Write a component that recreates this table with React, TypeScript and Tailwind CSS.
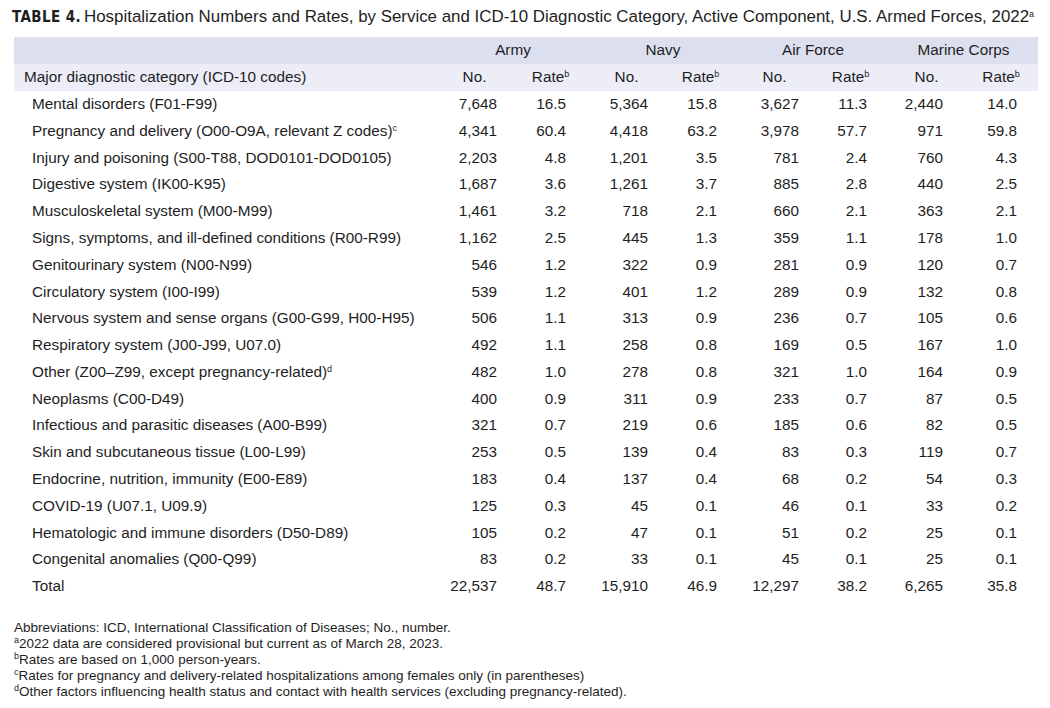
import React from "react";

const rows: [string, string | null, string[]][] = [
  ["Mental disorders (F01-F99)", null, ["7,648", "16.5", "5,364", "15.8", "3,627", "11.3", "2,440", "14.0"]],
  ["Pregnancy and delivery (O00-O9A, relevant Z codes)", "c", ["4,341", "60.4", "4,418", "63.2", "3,978", "57.7", "971", "59.8"]],
  ["Injury and poisoning (S00-T88, DOD0101-DOD0105)", null, ["2,203", "4.8", "1,201", "3.5", "781", "2.4", "760", "4.3"]],
  ["Digestive system (IK00-K95)", null, ["1,687", "3.6", "1,261", "3.7", "885", "2.8", "440", "2.5"]],
  ["Musculoskeletal system (M00-M99)", null, ["1,461", "3.2", "718", "2.1", "660", "2.1", "363", "2.1"]],
  ["Signs, symptoms, and ill-defined conditions (R00-R99)", null, ["1,162", "2.5", "445", "1.3", "359", "1.1", "178", "1.0"]],
  ["Genitourinary system (N00-N99)", null, ["546", "1.2", "322", "0.9", "281", "0.9", "120", "0.7"]],
  ["Circulatory system (I00-I99)", null, ["539", "1.2", "401", "1.2", "289", "0.9", "132", "0.8"]],
  ["Nervous system and sense organs (G00-G99, H00-H95)", null, ["506", "1.1", "313", "0.9", "236", "0.7", "105", "0.6"]],
  ["Respiratory system (J00-J99, U07.0)", null, ["492", "1.1", "258", "0.8", "169", "0.5", "167", "1.0"]],
  ["Other (Z00\u2013Z99, except pregnancy-related)", "d", ["482", "1.0", "278", "0.8", "321", "1.0", "164", "0.9"]],
  ["Neoplasms (C00-D49)", null, ["400", "0.9", "311", "0.9", "233", "0.7", "87", "0.5"]],
  ["Infectious and parasitic diseases (A00-B99)", null, ["321", "0.7", "219", "0.6", "185", "0.6", "82", "0.5"]],
  ["Skin and subcutaneous tissue (L00-L99)", null, ["253", "0.5", "139", "0.4", "83", "0.3", "119", "0.7"]],
  ["Endocrine, nutrition, immunity (E00-E89)", null, ["183", "0.4", "137", "0.4", "68", "0.2", "54", "0.3"]],
  ["COVID-19 (U07.1, U09.9)", null, ["125", "0.3", "45", "0.1", "46", "0.1", "33", "0.2"]],
  ["Hematologic and immune disorders (D50-D89)", null, ["105", "0.2", "47", "0.1", "51", "0.2", "25", "0.1"]],
  ["Congenital anomalies (Q00-Q99)", null, ["83", "0.2", "33", "0.1", "45", "0.1", "25", "0.1"]],
  ["Total", null, ["22,537", "48.7", "15,910", "46.9", "12,297", "38.2", "6,265", "35.8"]],
];

const pr = [
  "pr-[15px]",
  "pr-[23px]",
  "pr-[16px]",
  "pr-[20px]",
  "pr-[13px]",
  "pr-[22px]",
  "pr-[21px]",
  "pr-[21px]",
];

const grid = "grid grid-cols-[423px_75px_77px_75px_73px_75px_77px_75px_74px]";

function Sup({ c }: { c: string }) {
  return <span className="relative -top-[5px] text-[9px] leading-none">{c}</span>;
}

export default function App() {
  return (
    <div
      className="w-[1050px] h-[708px] bg-white text-[#1e1e1e] overflow-hidden"
      style={{ fontFamily: "'Liberation Sans', Arial, sans-serif" }}
    >
      <div className="pl-[12px] pt-[7px] h-[37px] text-[16.9px] leading-[20px] whitespace-nowrap">
        <span
          className="font-bold tracking-[0.4px] text-[15px] mr-[3px]"
          style={{ fontFamily: "'DejaVu Sans Condensed', 'Liberation Sans Narrow', sans-serif" }}
        >
          TABLE 4.
        </span>
        Hospitalization Numbers and Rates, by Service and ICD-10 Diagnostic Category, Active Component, U.S. Armed Forces, 2022
        <Sup c="a" />
      </div>

      <div className="ml-[14px] w-[1024px] text-[15.3px]">
        <div className={`${grid} h-[27px] items-center bg-[#dcdfee]`}>
          <div />
          <div className="col-span-2 text-center">Army</div>
          <div className="col-span-2 text-center">Navy</div>
          <div className="col-span-2 text-center">Air Force</div>
          <div className="col-span-2 text-center">Marine Corps</div>
        </div>
        <div className={`${grid} h-[27px] items-center bg-[#ecedf6]`}>
          <div className="pl-[10px] whitespace-nowrap">Major diagnostic category (ICD-10 codes)</div>
          {[0, 1, 2, 3].map((i) => (
            <React.Fragment key={i}>
              <div className="text-center">No.</div>
              <div className="text-center">
                Rate
                <Sup c="b" />
              </div>
            </React.Fragment>
          ))}
        </div>
        {rows.map(([label, sup, vals]) => (
          <div key={label} className={`${grid} h-[26.8px] items-center`}>
            <div className="pl-[18px] whitespace-nowrap">
              {label}
              {sup && <Sup c={sup} />}
            </div>
            {vals.map((v, i) => (
              <div key={i} className={`text-right ${pr[i]}`}>
                {v}
              </div>
            ))}
          </div>
        ))}
      </div>

      <div className="pl-[14px] pt-[20px] text-[13.5px] leading-[16px]">
        <div>Abbreviations: ICD, International Classification of Diseases; No., number.</div>
        <div>
          <Sup c="a" />
          2022 data are considered provisional but current as of March 28, 2023.
        </div>
        <div>
          <Sup c="b" />
          Rates are based on 1,000 person-years.
        </div>
        <div>
          <Sup c="c" />
          Rates for pregnancy and delivery-related hospitalizations among females only (in parentheses)
        </div>
        <div>
          <Sup c="d" />
          Other factors influencing health status and contact with health services (excluding pregnancy-related).
        </div>
      </div>
    </div>
  );
}
